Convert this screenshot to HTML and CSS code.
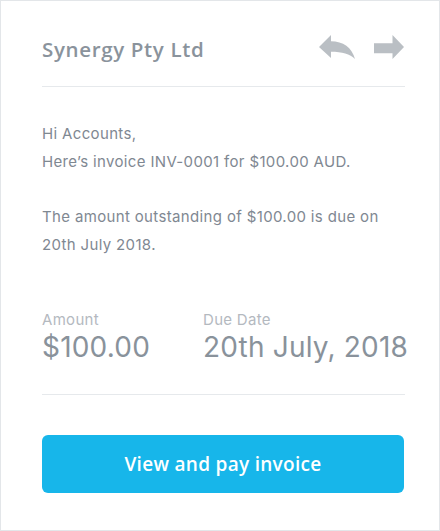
FILE: index.html
```html
<!DOCTYPE html>
<html lang="en">
<head>
<meta charset="utf-8">
<title>Invoice email</title>
<link rel="stylesheet" href="styles.css">
</head>
<body>
<div class="card">
  <header class="card-header">
    <h1 class="sender">Synergy Pty Ltd</h1>
    <div class="actions">
      <svg class="icon icon-reply" width="36" height="24" viewBox="0 0 36 24" aria-hidden="true">
        <path d="M0 12 L12 0 V6.2 C24 6.2 33 12.5 36 24 C31 18.8 23 16.8 12 16.8 V23 Z"/>
      </svg>
      <svg class="icon icon-forward" width="30" height="24" viewBox="0 0 30 24" aria-hidden="true">
        <path d="M0 8.3 H18.5 V0 L30 12 L18.5 24 V18.3 H0 Z"/>
      </svg>
    </div>
  </header>

  <section class="message">
    <p>Hi Accounts,<br>Here’s invoice INV-0001 for $100.00 AUD.</p>
    <p>The amount outstanding of $100.00 is due on<br>20th July 2018.</p>
  </section>

  <section class="summary">
    <div class="summary-item summary-amount">
      <div class="summary-label">Amount</div>
      <div class="summary-value">$100.00</div>
    </div>
    <div class="summary-item summary-date">
      <div class="summary-label">Due Date</div>
      <div class="summary-value">20th July, 2018</div>
    </div>
  </section>

  <div class="cta">
    <a class="button" href="#">View and pay invoice</a>
  </div>
</div>
</body>
</html>
```

FILE: styles.css
```css
html, body {
  margin: 0;
  padding: 0;
  background: #ffffff;
}

.card {
  box-sizing: border-box;
  width: 440px;
  height: 531px;
  border: 1px solid #e3e6e9;
  padding: 0 34px 0 41px;
  background: #ffffff;
}

.card-header {
  display: flex;
  justify-content: space-between;
  align-items: flex-start;
  padding: 34px 0 26px;
  border-bottom: 1px solid #e6e9ec;
}

.sender {
  margin: 0;
  padding-top: 3px;
  font-family: "Open Sans", "Lato", sans-serif;
  font-weight: 600;
  font-size: 20.5px;
  line-height: 22px;
  color: #8a939c;
  letter-spacing: 0.65px;
}

.actions {
  display: flex;
  gap: 19px;
  margin-right: 1px;
}

.icon {
  display: block;
  fill: #babfc4;
}

.message {
  padding-top: 33px;
  font-family: "Inter", "Liberation Sans", sans-serif;
  font-size: 15px;
  line-height: 28px;
  letter-spacing: 0.35px;
  color: #7f8892;
}

.message p {
  margin: 0 0 27px;
}

.message p:last-child {
  margin-bottom: 0;
}

.summary {
  display: flex;
  padding: 51px 0 30px;
  border-bottom: 1px solid #e6e9ec;
}

.summary-amount {
  flex: 0 0 161px;
}

.summary-date {
  flex: 1 1 auto;
  white-space: nowrap;
}

.summary-label {
  font-family: "Inter", "Liberation Sans", sans-serif;
  font-size: 15px;
  line-height: 20px;
  letter-spacing: 0.3px;
  color: #b4b9bf;
}

.summary-value {
  font-family: "Inter", "Liberation Sans", sans-serif;
  font-size: 28px;
  line-height: 34px;
  letter-spacing: 0.2px;
  color: #89929b;
}

.cta {
  padding-top: 40px;
}

.button {
  display: flex;
  align-items: center;
  justify-content: center;
  height: 58px;
  width: 362px;
  border-radius: 6px;
  background: #17b6ea;
  color: #ffffff;
  text-decoration: none;
  font-family: "Open Sans", "Lato", sans-serif;
  font-weight: 600;
  font-size: 19px;
  letter-spacing: 0.3px;
}
```
